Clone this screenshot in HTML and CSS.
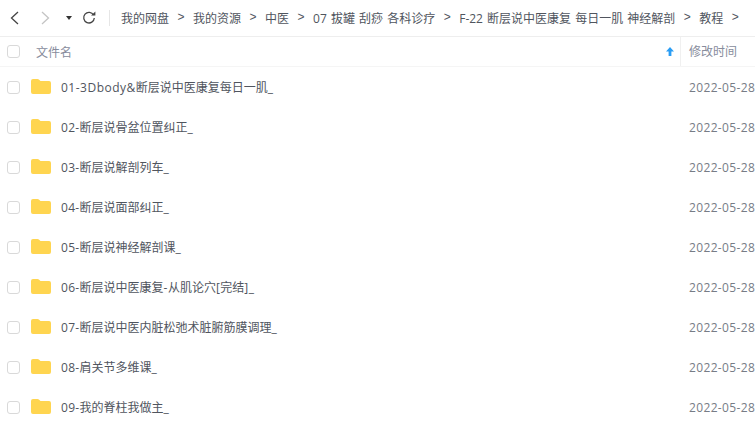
FILE: index.html
```html
<!DOCTYPE html>
<html lang="zh">
<head>
<meta charset="utf-8">
<title>教程</title>
<link rel="stylesheet" href="styles.css">
</head>
<body>
<svg class="defs" width="0" height="0"><symbol id="folder" viewBox="0 0 20 15"><path d="M0 2a2 2 0 0 1 2-2h4.500q.8 0 1.400.6L9.500 2H18a2 2 0 0 1 2 2v9a2 2 0 0 1-2 2H2a2 2 0 0 1-2-2z" fill="#ffd550"/></symbol></svg>
<div class="toolbar">
  <svg class="nav-back" width="14" height="16" viewBox="0 0 14 16"><path d="M10 2 3.500 8 10 14" fill="none" stroke="#444" stroke-width="1.300"/></svg>
  <svg class="nav-forward" width="14" height="16" viewBox="0 0 14 16"><path d="M4 2 10.500 8 4 14" fill="none" stroke="#c4c4c4" stroke-width="1.300"/></svg>
  <svg class="nav-drop" width="6" height="4" viewBox="0 0 6 4"><path d="M0 0h6L3 4z" fill="#333"/></svg>
  <svg class="nav-refresh" width="14" height="14" viewBox="0 0 14 14"><path d="M11.600 4A5.300 5.300 0 1 0 12.300 7" fill="none" stroke="#444" stroke-width="1.300"/><path d="M9 4.600h4.400V.6z" fill="#444"/></svg>
  <span class="divider"></span>
  <nav class="crumbs">
    <span>我的网盘</span><span class="sep">&gt;</span>
    <span>我的资源</span><span class="sep">&gt;</span>
    <span>中医</span><span class="sep">&gt;</span>
    <span>07 拔罐 刮痧 各科诊疗</span><span class="sep">&gt;</span>
    <span>F-22 断层说中医康复 每日一肌 神经解剖</span><span class="sep">&gt;</span>
    <span>教程</span><span class="sep">&gt;</span>
  </nav>
</div>
<div class="head">
  <span class="check"></span>
  <span class="head-name">文件名</span>
  <svg class="sort" width="8" height="9" viewBox="0 0 8 9"><path d="M4 0 8 4.500H5.400V9H2.600V4.500H0z" fill="#2a9df4"/></svg>
  <span class="head-time">修改时间</span>
</div>
<div class="list">
  <div class="row"><span class="check"></span><svg class="folder"><use href="#folder"/></svg><span class="name"><span class="lat-wide">01-3Dbody&amp;</span>断层说中医康复每日一肌_</span><span class="time">2022-05-28</span></div>
  <div class="row"><span class="check"></span><svg class="folder"><use href="#folder"/></svg><span class="name"><span class="lat">02-</span>断层说骨盆位置纠正_</span><span class="time">2022-05-28</span></div>
  <div class="row"><span class="check"></span><svg class="folder"><use href="#folder"/></svg><span class="name"><span class="lat">03-</span>断层说解剖列车_</span><span class="time">2022-05-28</span></div>
  <div class="row"><span class="check"></span><svg class="folder"><use href="#folder"/></svg><span class="name"><span class="lat">04-</span>断层说面部纠正_</span><span class="time">2022-05-28</span></div>
  <div class="row"><span class="check"></span><svg class="folder"><use href="#folder"/></svg><span class="name"><span class="lat">05-</span>断层说神经解剖课_</span><span class="time">2022-05-28</span></div>
  <div class="row"><span class="check"></span><svg class="folder"><use href="#folder"/></svg><span class="name"><span class="lat">06-</span>断层说中医康复<span class="lat-wide">-</span>从肌论穴<span class="lat-wide">[</span>完结<span class="lat-wide">]</span>_</span><span class="time">2022-05-28</span></div>
  <div class="row"><span class="check"></span><svg class="folder"><use href="#folder"/></svg><span class="name"><span class="lat">07-</span>断层说中医内脏松弛术脏腑筋膜调理_</span><span class="time">2022-05-28</span></div>
  <div class="row"><span class="check"></span><svg class="folder"><use href="#folder"/></svg><span class="name"><span class="lat">08-</span>肩关节多维课_</span><span class="time">2022-05-28</span></div>
  <div class="row"><span class="check"></span><svg class="folder"><use href="#folder"/></svg><span class="name"><span class="lat">09-</span>我的脊柱我做主_</span><span class="time">2022-05-28</span></div>
</div>
</body>
</html>
```
FILE: styles.css
```css
* { box-sizing: border-box; }
html, body { margin: 0; height: 100%; overflow: hidden; background: #fff; }
body {
  font-family: "Open Sans", "Noto Sans CJK SC", sans-serif;
  font-size: 12px;
  color: #50555e;
  width: 755px;
}
.defs { display: block; height: 0; }
.toolbar {
  height: 37px;
  display: flex;
  align-items: center;
  border-bottom: 1px solid #eeeeee;
  white-space: nowrap;
  overflow: hidden;
}
.nav-back { margin-left: 8px; flex: none; }
.nav-forward { margin-left: 16px; flex: none; }
.nav-drop { margin-left: 14px; flex: none; }
.nav-refresh { margin-left: 10px; flex: none; }
.divider { width: 1px; height: 16px; background: #e6e6e6; margin-left: 13px; flex: none; }
.crumbs { display: flex; margin-left: 11px; color: #50555e; word-spacing: 1px; }
.sep { margin: 1px 8.5px 0; font-family: "Liberation Sans", sans-serif; }
.head {
  height: 30px;
  display: flex;
  align-items: center;
  padding-left: 7px;
  border-bottom: 1px solid #f5f5f5;
  color: #878c9c;
}
.check {
  width: 13px;
  height: 13px;
  border: 1px solid #d9d9d9;
  border-radius: 3px;
  flex: none;
  background: #fff;
}
.head-name { margin-left: 16px; flex: 1; }
.sort { flex: none; margin-right: 6px; }
.head-time {
  width: 75px;
  height: 100%;
  flex: none;
  padding-left: 8px;
  line-height: 29px;
  border-left: 1px solid #f0f0f0;
}
.row {
  height: 40px;
  display: flex;
  align-items: center;
  padding-left: 7px;
}
.folder { width: 20px; height: 15px; margin-left: 11px; margin-top: -1px; flex: none; }
.name { margin-left: 10px; flex: 1; color: #50555e; }
.lat { letter-spacing: 0.3px; }
.lat-wide { letter-spacing: 0.5px; }
.time { width: 66px; flex: none; color: #777c86; white-space: nowrap; letter-spacing: 0.35px; }
```
